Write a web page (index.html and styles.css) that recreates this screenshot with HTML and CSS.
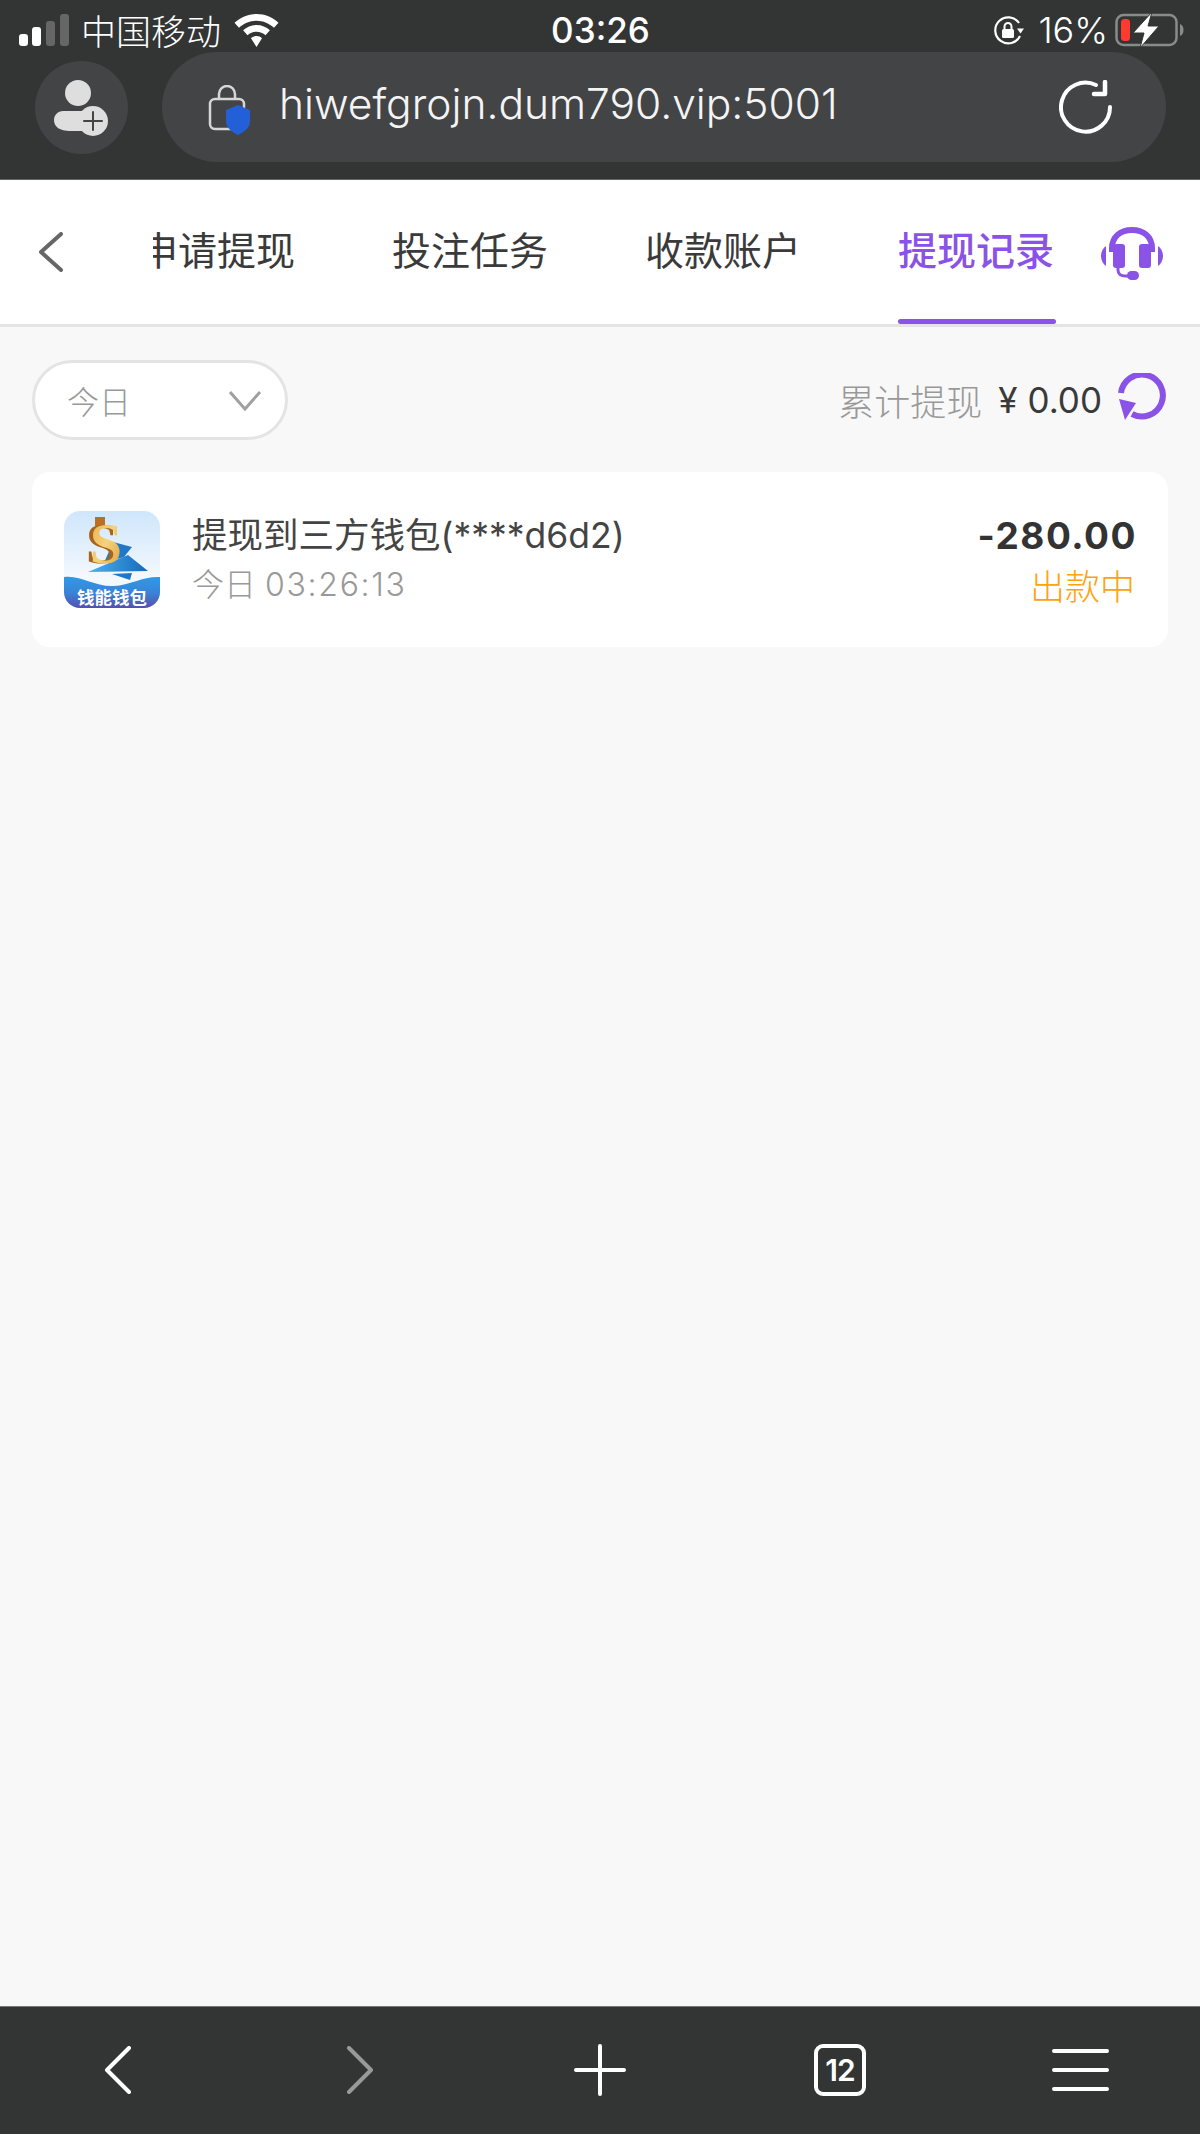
FILE: index.html
```html
<!DOCTYPE html>
<html lang="zh-CN">
<head>
    <meta charset="UTF-8">
    <title>提现记录</title>
    <link rel="stylesheet" href="styles.css">
</head>
<body>
    <header class="browser-bar">
        <div class="status-row">
            <div class="status-left">
                <svg class="signal" width="50" height="32" viewBox="0 0 50 32">
                    <rect x="0" y="20" width="9" height="12" rx="3" fill="#fff"/>
                    <rect x="13" y="13" width="9" height="19" rx="3" fill="#fff"/>
                    <rect x="27" y="7" width="9" height="25" rx="3" fill="#666"/>
                    <rect x="41" y="0" width="9" height="32" rx="3" fill="#666"/>
                </svg>
                <span class="carrier">中国移动</span>
                <svg class="wifi" width="45" height="33" viewBox="0 0 45 33">
                    <path d="M22.5 0C14 0 6.500 3.300 0.500 8.800L5 13.800C9.600 9.500 15.700 6.700 22.500 6.700S35.400 9.500 40 13.800L44.500 8.800C38.500 3.300 31 0 22.500 0Z" fill="#fff"/>
                    <path d="M22.500 11C17.400 11 12.700 13 9.100 16.300L13.500 21.200C15.900 19 19 17.700 22.500 17.700S29.100 19 31.500 21.200L35.900 16.300C32.300 13 27.600 11 22.500 11Z" fill="#fff"/>
                    <path d="M22.500 22C20.400 22 18.500 22.800 17 24.200L22.500 33L28 24.200C26.500 22.800 24.600 22 22.500 22Z" fill="#fff"/>
                </svg>
            </div>
            <div class="status-time">03:26</div>
            <div class="status-right">
                <svg class="rotate-lock" width="32" height="30" viewBox="0 0 32 30">
                    <path d="M27 20A13 13 0 1 1 26 7" fill="none" stroke="#fff" stroke-width="2.200"/>
                    <path d="M24 12.500H31L27.500 17.500Z" fill="#fff"/>
                    <rect x="9" y="13" width="12" height="9" rx="1.500" fill="#fff"/>
                    <path d="M11.500 13V10.500A3.500 3.500 0 0 1 18.500 10.500V13" fill="none" stroke="#fff" stroke-width="2"/>
                </svg>
                <span class="battery-pct">16%</span>
                <svg class="battery" width="70" height="36" viewBox="0 0 70 36">
                    <rect x="1.500" y="3" width="60" height="30" rx="7" fill="none" stroke="#8a8a8a" stroke-width="2.500"/>
                    <path d="M65 12C67.500 13 68.500 15 68.500 18S67.500 23 65 24Z" fill="#8a8a8a"/>
                    <rect x="6" y="7" width="9" height="22" rx="3.500" fill="#ff3b30"/>
                    <path d="M37 0L18 21H29L25 36L44 14H33Z" fill="#fff" stroke="#333534" stroke-width="1"/>
                </svg>
            </div>
        </div>
        <div class="toolbar-row">
            <div class="avatar-btn">
                <svg width="60" height="60" viewBox="0 0 60 60">
                    <circle cx="25" cy="13" r="13" fill="#dedede"/>
                    <path d="M10 31H34C29 36 28 44 32 51H17C7 51 1 47 1 40C1 35 5 31 10 31Z" fill="#dedede"/>
                    <circle cx="40" cy="41" r="15" fill="#dedede"/>
                    <path d="M40 32V50M31 41H49" stroke="#444" stroke-width="2" stroke-linecap="round"/>
                </svg>
            </div>
            <div class="url-pill">
                <svg class="url-lock" width="44" height="50" viewBox="0 0 44 50">
                    <rect x="2" y="14" width="34" height="30" rx="5" fill="none" stroke="#d6d6d6" stroke-width="2.500"/>
                    <path d="M11 14V9A8 8 0 0 1 27 9V14" fill="none" stroke="#d6d6d6" stroke-width="2.500"/>
                    <path d="M30 20L42 25V36C42 43 36 47 30 50C24 47 18 43 18 36V25Z" fill="#2360d8"/>
                </svg>
                <span class="url-text">hiwefgrojn.dum790.vip:5001</span>
                <svg class="url-reload" width="54" height="54" viewBox="0 0 54 54">
                    <path d="M51 27A24.500 24.500 0 1 1 37 5" fill="none" stroke="#fff" stroke-width="4" stroke-linecap="round"/>
                    <path d="M46 2V14H35" fill="none" stroke="#fff" stroke-width="4.500" stroke-linecap="round" stroke-linejoin="round"/>
                </svg>
            </div>
        </div>
    </header>

    <nav class="tab-nav">
        <svg class="nav-back" width="26" height="40" viewBox="0 0 26 40">
            <path d="M23 2L3 20L23 38" fill="none" stroke="#666" stroke-width="4" stroke-linecap="round" stroke-linejoin="round"/>
        </svg>
        <div class="tab-scroll">
            <div class="tab-list">
                <a class="tab">申请提现</a>
                <a class="tab">投注任务</a>
                <a class="tab">收款账户</a>
                <a class="tab tab-active">提现记录</a>
            </div>
        </div>
        <svg class="nav-support" width="62" height="54" viewBox="0 0 62 54">
            <path d="M11 25V21C11 10 19 3 31 3S51 10 51 21V25" fill="none" stroke="#8a52e6" stroke-width="6"/>
            <rect x="12" y="17" width="12" height="24" rx="3" fill="#8a52e6"/>
            <rect x="38" y="17" width="12" height="24" rx="3" fill="#8a52e6"/>
            <path d="M5 19V39C2 37 0 33 0 29S2 21 5 19Z" fill="#8a52e6"/>
            <path d="M57 19V39C60 37 62 33 62 29S60 21 57 19Z" fill="#8a52e6"/>
            <path d="M17 41V43C17 47 20 49 24 49H32" fill="none" stroke="#8a52e6" stroke-width="3"/>
            <rect x="26" y="44" width="12" height="9" rx="4.500" fill="#8a52e6"/>
        </svg>
    </nav>

    <main class="content">
        <div class="filter-row">
            <div class="date-select">
                <span>今日</span>
                <svg width="34" height="21" viewBox="0 0 34 21">
                    <path d="M2 2L17 19L32 2" fill="none" stroke="#a0a0a0" stroke-width="3"/>
                </svg>
            </div>
            <div class="total">
                <span class="total-label">累计提现</span>
                <span class="total-value">¥ 0.00</span>
                <svg class="total-refresh" width="50" height="48" viewBox="0 0 50 48">
                    <path d="M3 20A21 21 0 1 1 14 41" fill="none" stroke="#8a52e6" stroke-width="6"/>
                    <path d="M1 26L18 30L7 47Z" fill="#8a52e6"/>
                </svg>
            </div>
        </div>

        <div class="record-card">
            <svg class="record-logo" width="96" height="97" viewBox="0 0 96 97">
                <defs>
                    <linearGradient id="logoBg" x1="0" y1="0" x2="0" y2="1">
                        <stop offset="0" stop-color="#cfe6fb"/>
                        <stop offset="0.7" stop-color="#f4f9fe"/>
                    </linearGradient>
                    <linearGradient id="logoWave" x1="0" y1="0" x2="0" y2="1">
                        <stop offset="0" stop-color="#2f9ae6"/>
                        <stop offset="0.5" stop-color="#3a84d8"/>
                        <stop offset="1" stop-color="#5450ae"/>
                    </linearGradient>
                    <linearGradient id="logoGold" x1="0" y1="0" x2="1" y2="1">
                        <stop offset="0" stop-color="#e6a94a"/>
                        <stop offset="0.5" stop-color="#f6d27a"/>
                        <stop offset="1" stop-color="#d89a38"/>
                    </linearGradient>
                    <linearGradient id="logoBlue" x1="0" y1="0" x2="1" y2="0">
                        <stop offset="0" stop-color="#4ab4ec"/>
                        <stop offset="1" stop-color="#1668bd"/>
                    </linearGradient>
                    <clipPath id="logoClip">
                        <rect width="96" height="97" rx="16"/>
                    </clipPath>
                </defs>
                <g clip-path="url(#logoClip)">
                    <rect width="96" height="97" fill="url(#logoBg)"/>
                    <path d="M49 31L68 36L60 46L40 52Z" fill="#1f78c8"/>
                    <path d="M24 61L64 44L84 60Z" fill="url(#logoBlue)"/>
                    <path d="M48 63L68 62L66 69Z" fill="#1f78c8"/>
                    <rect x="31" y="6" width="10" height="9" fill="#b9701f"/>
                    <text class="logo-dollar" x="42" y="52" fill="url(#logoGold)">S</text>
                    <path d="M0 66C18 64 30 76 50 75C66 74 80 65 96 66V97H0Z" fill="url(#logoWave)"/>
                    <text class="logo-name" x="48" y="93">钱能钱包</text>
                </g>
            </svg>
            <div class="record-info">
                <div class="record-title">提现到三方钱包(****d6d2)</div>
                <div class="record-time">今日 <span class="record-clock">03:26:13</span></div>
            </div>
            <div class="record-side">
                <div class="record-amount">-280.00</div>
                <div class="record-state">出款中</div>
            </div>
        </div>
    </main>

    <footer class="bottom-bar">
        <div class="bottom-item">
            <svg class="bottom-back" width="28" height="48" viewBox="0 0 28 48">
                <path d="M25 2L3 24L25 46" fill="none" stroke="#fff" stroke-width="4" stroke-linecap="round" stroke-linejoin="round"/>
            </svg>
        </div>
        <div class="bottom-item">
            <svg width="28" height="48" viewBox="0 0 28 48">
                <path d="M3 2L25 24L3 46" fill="none" stroke="#999" stroke-width="4" stroke-linecap="round" stroke-linejoin="round"/>
            </svg>
        </div>
        <div class="bottom-item">
            <svg width="52" height="52" viewBox="0 0 52 52">
                <path d="M26 2V50M2 26H50" stroke="#fff" stroke-width="4" stroke-linecap="round"/>
            </svg>
        </div>
        <div class="bottom-item">
            <div class="tab-count">12</div>
        </div>
        <div class="bottom-item">
            <div class="menu-lines"><i></i><i></i><i></i></div>
        </div>
    </footer>
</body>
</html>
```

FILE: styles.css
```css
* {
    box-sizing: border-box;
}
body {
    margin: 0;
    height: 100vh;
    display: flex;
    flex-direction: column;
    background: #f8f8f8;
    font-family: Inter, "Noto Sans CJK SC", sans-serif;
    color: #333;
}

/* browser chrome */
.browser-bar {
    height: 180px;
    background: #333534;
    border-bottom: 1px solid #666;
    color: #fff;
}
.status-row {
    height: 52px;
    padding: 8px 15px 0 19px;
    display: grid;
    grid-template-columns: 1fr auto 1fr;
    align-items: center;
}
.status-left, .status-right {
    display: flex;
    align-items: center;
}
.status-right {
    justify-content: flex-end;
}
.carrier {
    margin-left: 12px;
    font-size: 35px;
    line-height: 44px;
    font-family: "Noto Sans CJK SC", sans-serif;
    font-weight: 300;
}
.wifi {
    margin-left: 13px;
}
.status-time {
    font-size: 35px;
    font-weight: 500;
    line-height: 44px;
    margin-right: 3px;
}
.rotate-lock {
    margin-top: 2px;
}
.battery-pct {
    margin-left: 13px;
    font-size: 36px;
    font-weight: 300;
    line-height: 44px;
}
.battery {
    margin-left: 7px;
}
.toolbar-row {
    height: 127px;
    padding: 0 34px 17px 35px;
    display: flex;
    align-items: center;
    gap: 34px;
}
.avatar-btn {
    width: 93px;
    height: 93px;
    flex: none;
    border-radius: 50%;
    background: #434445;
    display: flex;
    align-items: center;
    justify-content: center;
    padding: 6px 0 0 3px;
}
.url-pill {
    flex: 1;
    height: 110px;
    border-radius: 55px;
    background: #434445;
    display: flex;
    align-items: center;
    padding: 0 53px 0 46px;
}
.url-lock {
    flex: none;
    margin-top: 6px;
}
.url-text {
    flex: 1;
    margin: -8px 0 0 27px;
    font-size: 42.500px;
    font-weight: 300;
    color: #f4f4f4;
}

/* tabs */
.tab-nav {
    height: 147px;
    background: #fff;
    border-bottom: 3px solid #e4e4e4;
    display: flex;
    align-items: stretch;
    position: relative;
}
.nav-back {
    flex: none;
    align-self: center;
    margin: 0 0 0 38px;
}
.tab-scroll {
    width: 933px;
    margin-left: 89px;
    overflow: hidden;
}
.tab-list {
    display: flex;
    gap: 97px;
    margin-left: -14px;
    height: 100%;
}
.tab {
    flex: none;
    font-size: 39px;
    font-family: "Noto Sans CJK SC", sans-serif;
    font-weight: 400;
    color: #3a3a3a;
    line-height: 136px;
    height: 100%;
}
.tab-active {
    color: #8a52e6;
    font-weight: 500;
    position: relative;
}
.tab-active::after {
    content: "";
    position: absolute;
    left: 0;
    right: -2px;
    bottom: 0;
    height: 5px;
    border-radius: 3px;
    background: #8a52e6;
}
.nav-support {
    position: absolute;
    left: 1101px;
    top: 47px;
}

/* page content */
.content {
    flex: 1;
    padding: 33px 32px 0;
}
.filter-row {
    display: flex;
    align-items: center;
    justify-content: space-between;
}
.date-select {
    width: 256px;
    height: 80px;
    border: 3px solid #e4e4e4;
    border-radius: 40px;
    background: #fff;
    display: flex;
    align-items: center;
    justify-content: space-between;
    padding: 0 23px 0 32px;
    color: #999;
    font-size: 32px;
    font-family: "Noto Sans CJK SC", sans-serif;
    font-weight: 300;
}
.total {
    display: flex;
    align-items: center;
}
.total-label {
    font-size: 36px;
    font-family: "Noto Sans CJK SC", sans-serif;
    font-weight: 300;
    color: #999;
}
.total-value {
    margin-left: 16px;
    font-size: 35px;
    font-weight: 400;
    color: #3a3a3a;
}
.total-refresh {
    margin-left: 16px;
    margin-top: -6px;
}
.record-card {
    margin-top: 32px;
    height: 175px;
    background: #fff;
    border-radius: 18px;
    display: flex;
    align-items: center;
    padding: 0 33px 0 32px;
}
.record-logo {
    flex: none;
}
.logo-dollar {
    font-family: "Liberation Serif", serif;
    font-size: 58px;
    font-weight: 700;
    text-anchor: middle;
    filter: drop-shadow(-4px 0 0 #a8641c);
}
.logo-name {
    font-family: "Noto Sans CJK SC", sans-serif;
    font-size: 17.500px;
    font-weight: 700;
    fill: #fff;
    text-anchor: middle;
}
.record-info {
    flex: 1;
    margin-left: 32px;
}
.record-title {
    font-size: 35.500px;
    line-height: 50px;
    color: #444;
    font-weight: 400;
}
.record-time {
    font-size: 32px;
    line-height: 48px;
    color: #999;
    font-weight: 300;
}
.record-clock {
    letter-spacing: 1.700px;
}
.record-side {
    text-align: right;
}
.record-amount {
    font-size: 37px;
    line-height: 50px;
    font-weight: 700;
    letter-spacing: 1.500px;
    color: #333;
    margin-right: -2px;
}
.record-state {
    font-size: 35px;
    line-height: 48px;
    color: #ffa20d;
    font-family: "Noto Sans CJK SC", sans-serif;
    font-weight: 300;
}

/* browser bottom bar */
.bottom-bar {
    height: 128px;
    flex: none;
    background: #333534;
    border-top: 1px solid #777;
    display: flex;
}
.bottom-item {
    flex: 1;
    display: flex;
    align-items: center;
    justify-content: center;
    padding-bottom: 2px;
}
.bottom-back {
    margin-right: 4px;
}
.tab-count {
    width: 52px;
    height: 52px;
    border: 4px solid #fff;
    border-radius: 9px;
    color: #fff;
    font-size: 30px;
    font-weight: 600;
    line-height: 44px;
    text-align: center;
    letter-spacing: -1px;
}
.menu-lines {
    display: flex;
    flex-direction: column;
    gap: 15px;
    width: 57px;
}
.menu-lines i {
    display: block;
    height: 4px;
    border-radius: 2px;
    background: #fff;
}
```
